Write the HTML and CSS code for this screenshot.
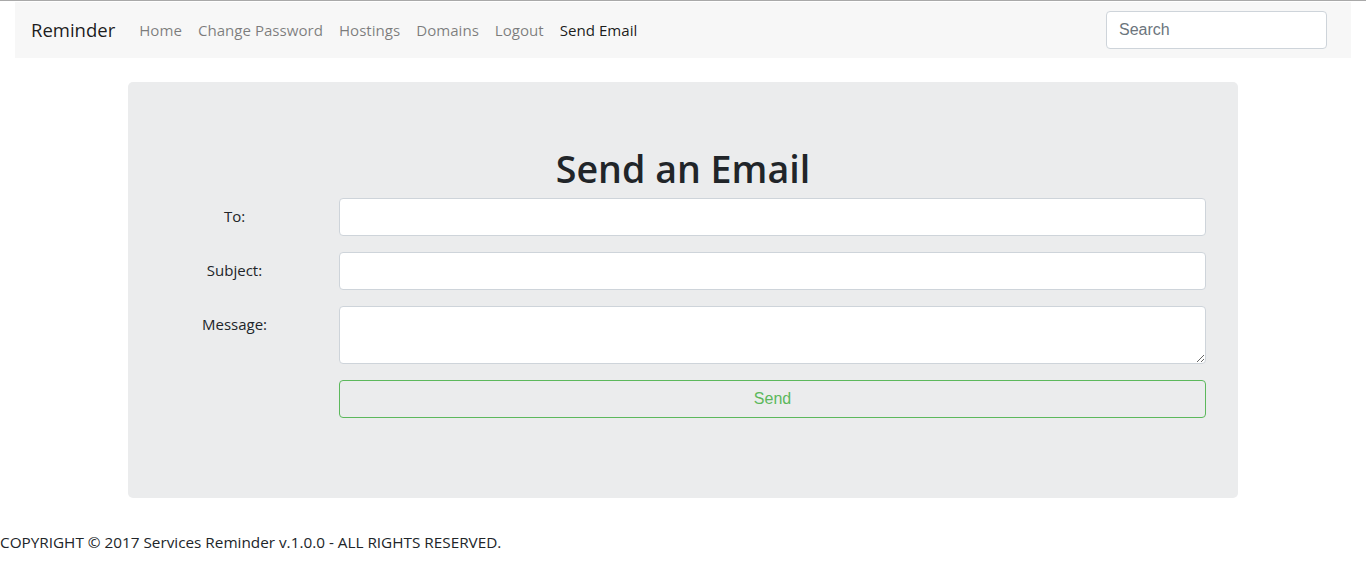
FILE: index.html
```html
<!DOCTYPE html>
<html>
<head>
<meta charset="utf-8">
<link rel="stylesheet" href="styles.css">
</head>
<body>
<div class="topline"></div>
<div class="nav-wrap">
  <nav class="navbar">
    <a class="brand">Reminder</a>
    <ul class="nav">
      <li><a class="nav-link">Home</a></li>
      <li><a class="nav-link">Change Password</a></li>
      <li><a class="nav-link">Hostings</a></li>
      <li><a class="nav-link">Domains</a></li>
      <li><a class="nav-link">Logout</a></li>
      <li><a class="nav-link active">Send Email</a></li>
    </ul>
    <input class="search" type="text" placeholder="Search">
  </nav>
</div>
<div class="container">
  <div class="jumbotron">
    <h1 class="title">Send an Email</h1>
    <form class="form">
      <div class="row">
        <label class="label">To:</label>
        <div class="field"><input class="control" type="text"></div>
      </div>
      <div class="row">
        <label class="label">Subject:</label>
        <div class="field"><input class="control" type="text"></div>
      </div>
      <div class="row">
        <label class="label">Message:</label>
        <div class="field"><textarea class="control area"></textarea></div>
      </div>
      <div class="row">
        <div class="label"></div>
        <div class="field"><button type="button" class="btn">Send</button></div>
      </div>
    </form>
  </div>
</div>
<footer class="footer">COPYRIGHT © 2017 Services Reminder v.1.0.0 - ALL RIGHTS RESERVED.</footer>
</body>
</html>
```
FILE: styles.css
```css
* { box-sizing: border-box; }
html, body { margin: 0; padding: 0; }
body {
  font-family: "Open Sans", "Noto Sans", sans-serif;
  font-size: 15px;
  line-height: 24px;
  color: #212529;
  background: #fff;
}
.topline { height: 2px; background: #fff; border-top: 1px solid #a9a9a9; }
.nav-wrap { padding: 0 15px; }
.navbar {
  display: flex;
  align-items: center;
  background: #f7f7f7;
  padding: 8px 16px;
  height: 56px;
}
.brand {
  font-size: 18.5px;
  color: rgba(0,0,0,.9);
  margin-right: 16px;
  line-height: 30px;
}
.nav { display: flex; list-style: none; margin: 0; padding: 0; flex: 1; }
.nav-link { display: block; padding: 8px 8px; color: rgba(0,0,0,.5); font-size: 15.1px; }
.nav-link.active { color: rgba(0,0,0,.9); }
.search {
  width: 221px;
  height: 38px;
  margin-right: 8px;
  border: 1px solid #ced4da;
  border-radius: 4px;
  padding: 6px 12px;
  font-family: "Liberation Sans", Arial, sans-serif;
  font-size: 16px;
  background: #fff;
}
.search::placeholder { color: #6c757d; }
.container { width: 1140px; margin: 0 auto; padding: 0 15px; }
.jumbotron {
  background: #ebeced;
  border-radius: 5px;
  padding: 64px 32px;
  margin-top: 24px;
  margin-bottom: 32px;
}
.title {
  text-align: center;
  font-size: 37.6px;
  font-weight: 600;
  line-height: 46px;
  margin: 0 0 6px;
  color: #212529;
}
.form { margin: 0 -15px; }
.row { display: flex; margin-bottom: 16px; }
.label {
  width: 179px;
  padding: 6px 15px 0;
  text-align: center;
  line-height: 24px;
}
.field { flex: 1; padding: 0 15px; }
.control {
  display: block;
  width: 100%;
  height: 38px;
  border: 1px solid #ced4da;
  border-radius: 4px;
  background: #fff;
  padding: 6px 12px;
  font-size: 16px;
}
.area { height: 58px; resize: vertical; }
.btn {
  display: block;
  width: 100%;
  height: 38px;
  border: 1px solid #5cb85c;
  border-radius: 4px;
  background: transparent;
  color: #5cb85c;
  font-family: "Liberation Sans", Arial, sans-serif;
  font-size: 16px;
}
.footer { padding: 0; line-height: 24px; font-size: 15.3px; }
```
